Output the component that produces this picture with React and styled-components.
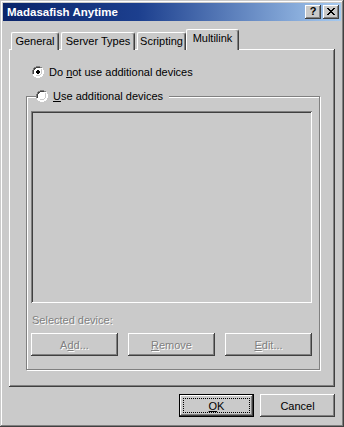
import React from "react";
import styled, { createGlobalStyle } from "styled-components";

const FACE = "#cacaca";

const GlobalStyle = createGlobalStyle`
  html, body {
    margin: 0;
    padding: 0;
    background: ${FACE};
  }
  * {
    box-sizing: border-box;
  }
`;

// Window frame
const Window = styled.div`
  width: 344px;
  height: 427px;
  background: ${FACE};
  padding: 3px;
  display: flex;
  flex-direction: column;
  font-family: "Liberation Sans", Arial, sans-serif;
  font-size: 11px;
  color: #000;
  box-shadow: inset -1px -1px #404040, inset 1px 1px ${FACE},
    inset -2px -2px #808080, inset 2px 2px #fff;
`;

const TitleBar = styled.div`
  height: 18px;
  display: flex;
  align-items: center;
  padding: 0 2px 0 4px;
  background: linear-gradient(90deg, #0a246a 0%, #1c3f8e 40%, #a6caf0 100%);
`;

const Title = styled.span`
  color: #fff;
  font-weight: bold;
  font-size: 11.5px;
`;

const TitleButtons = styled.div`
  margin-left: auto;
  display: flex;
  gap: 2px;
`;

const raised = `
  background: ${FACE};
  box-shadow: inset -1px -1px #404040, inset 1px 1px #fff,
    inset -2px -2px #808080, inset 2px 2px ${FACE};
`;

const CaptionButton = styled.div`
  width: 16px;
  height: 14px;
  ${raised}
  display: flex;
  align-items: center;
  justify-content: center;
  font-weight: bold;
  font-size: 11px;
  line-height: 1;
  padding-bottom: 1px;
`;

const Body = styled.div`
  flex: 1;
  display: flex;
  flex-direction: column;
  padding: 9px 6px 0 6px;
`;

// Tabs
const TabStrip = styled.div`
  display: flex;
  align-items: flex-end;
  gap: 2px;
  padding-left: 2px;
  height: 20px;
  position: relative;
  z-index: 1;
  margin-bottom: -1px;
`;

const Tab = styled.div`
  width: ${({ $w }) => $w}px;
  height: ${({ $active }) => ($active ? 21 : 18)}px;
  margin: ${({ $active }) => ($active ? "0 -2px" : "0")};
  padding-bottom: ${({ $active }) => ($active ? 4 : 1)}px;
  position: relative;
  z-index: ${({ $active }) => ($active ? 2 : 1)};
  background: ${FACE};
  border-top: 1px solid #fff;
  border-left: 1px solid #fff;
  border-right: 1px solid #404040;
  border-radius: 2px 3px 0 0;
  box-shadow: inset -1px 0 #808080;
  display: flex;
  align-items: center;
  justify-content: center;
  white-space: nowrap;
`;

const Panel = styled.div`
  height: 338px;
  padding: 17px 0 0 17px;
  box-shadow: inset -1px -1px #404040, inset 1px 1px #fff,
    inset -2px -2px #808080, inset 2px 2px ${FACE};
`;

const RadioRow = styled.label`
  display: flex;
  align-items: center;
  gap: 5px;
  margin-left: ${({ $indent = 6 }) => $indent}px;
  height: 12px;
  white-space: nowrap;
`;

const U = styled.span`
  text-decoration: underline;
  text-underline-offset: 1px;
`;

const Group = styled.fieldset`
  width: 294px;
  margin: 12px 0 0 0;
  padding: 0 0 13px 4px;
  border: 1px solid #808080;
  box-shadow: inset 1px 1px #fff, 1px 1px #fff;
`;

const Legend = styled.legend`
  margin-left: 5px;
  padding: 0 6px 0 0;
  background: ${FACE};
  height: 13px;
`;

const ListBox = styled.div`
  width: 281px;
  height: 192px;
  margin-top: 8px;
  background: ${FACE};
  box-shadow: inset 1px 1px #808080, inset -1px -1px #fff,
    inset 2px 2px #404040, inset -2px -2px ${FACE};
`;

const DisabledText = styled.div`
  color: #808080;
  text-shadow: 1px 1px #fff;
  margin: 11px 0 0 1px;
  height: 13px;
`;

const ButtonRow = styled.div`
  display: flex;
  justify-content: space-between;
  width: 281px;
  margin-top: 6px;
`;

const Button = styled.div`
  width: ${({ $w }) => $w || 75}px;
  height: 23px;
  ${raised}
  display: flex;
  align-items: center;
  justify-content: center;
  color: ${({ $disabled }) => ($disabled ? "#808080" : "#000")};
  text-shadow: ${({ $disabled }) => ($disabled ? "1px 1px #fff" : "none")};
  position: relative;
`;

const DefaultButton = styled(Button)`
  box-shadow: inset 0 0 0 1px #000, inset -2px -2px #404040,
    inset 2px 2px #fff, inset -3px -3px #808080;
  &::after {
    content: "";
    position: absolute;
    inset: 4px;
    border: 1px dotted #000;
  }
`;

const Footer = styled.div`
  display: flex;
  justify-content: flex-end;
  gap: 6px;
  margin-top: 7px;
`;

const Radio = ({ checked }) => (
  <svg width="12" height="12" viewBox="0 0 12 12" shapeRendering="crispEdges">
    <path d="M4 0h4v1h2v1h1v2h1v4h-1v2h-1v1h-2v1h-4v-1h-2v-1h-1v-2h-1v-4h1v-2h1v-1h2z" fill="#fff" />
    <path d="M4 0h4v1h2v1h-2v-1h-4v1h-2v2h-1v4h-1v-4h1v-2h1v-1h2z" fill="#808080" />
    <path d="M4 1h4v1h-4v1h-1v1h-1v4h-1v-4h1v-2h2z" fill="#404040" />
    <path d="M10 2h1v2h1v4h-1v2h-1v1h-2v1h-4v-1h4v-1h2v-2h1v-4h-1z" fill="#fff" />
    <path d="M9 3h1v1h0v4h-1v1h-1v1h-4v-1h4v-1h1v-4h0z" fill={FACE} />
    <path d="M2 4h1v-1h1v-1h4v1h1v1h0v4h-1v1h-4v-1h-1v-1h-1z" fill="#fff" />
    {checked && <path d="M5 4h2v1h1v2h-1v1h-2v-1h-1v-2h1z" fill="#000" />}
  </svg>
);

const CloseGlyph = () => (
  <svg width="8" height="7" viewBox="0 0 8 7" shapeRendering="crispEdges">
    <path d="M0 0h2v1h1v1h2v-1h1v-1h2v1h-1v1h-1v1h-1v1h1v1h1v1h1v1h-2v-1h-1v-1h-2v1h-1v1h-2v-1h1v-1h1v-1h1v-1h-1v-1h-1v-1h-1z" fill="#000" />
  </svg>
);

const tabs = [
  { name: "General", w: 48 },
  { name: "Server Types", w: 74 },
  { name: "Scripting", w: 49 },
  { name: "Multilink", w: 53, active: true },
];

export default function App() {
  return (
    <>
      <GlobalStyle />
      <Window>
        <TitleBar>
          <Title>Madasafish Anytime</Title>
          <TitleButtons>
            <CaptionButton>?</CaptionButton>
            <CaptionButton>
              <CloseGlyph />
            </CaptionButton>
          </TitleButtons>
        </TitleBar>
        <Body>
          <TabStrip>
            {tabs.map((t) => (
              <Tab key={t.name} $w={t.w} $active={t.active}>
                {t.name}
              </Tab>
            ))}
          </TabStrip>
          <Panel>
            <RadioRow>
              <Radio checked />
              <span>
                Do <U>n</U>ot use additional devices
              </span>
            </RadioRow>
            <Group>
              <Legend>
                <RadioRow as="span" $indent={0}>
                  <Radio />
                  <span>
                    <U>U</U>se additional devices
                  </span>
                </RadioRow>
              </Legend>
              <ListBox />
              <DisabledText>Selected device:</DisabledText>
              <ButtonRow>
                <Button $w={87} $disabled>
                  <span>
                    A<U>d</U>d...
                  </span>
                </Button>
                <Button $w={87} $disabled>
                  <span>
                    <U>R</U>emove
                  </span>
                </Button>
                <Button $w={87} $disabled>
                  <span>
                    <U>E</U>dit...
                  </span>
                </Button>
              </ButtonRow>
            </Group>
          </Panel>
          <Footer>
            <DefaultButton>
              <span>
                <U>O</U>K
              </span>
            </DefaultButton>
            <Button>Cancel</Button>
          </Footer>
        </Body>
      </Window>
    </>
  );
}
